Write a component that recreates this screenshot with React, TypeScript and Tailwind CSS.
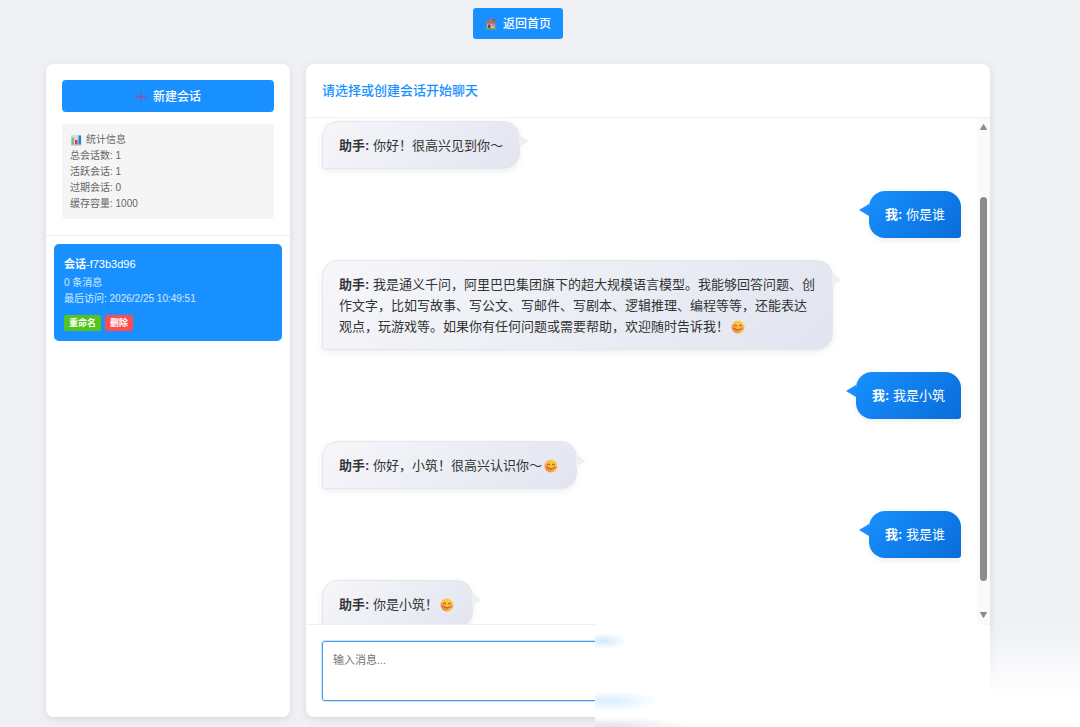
import React from "react";

type Message = { from: "assistant" | "user"; text: string; smile?: boolean };

const messages: Message[] = [
  { from: "assistant", text: "你好！很高兴见到你～" },
  { from: "user", text: "你是谁" },
  {
    from: "assistant",
    text: "我是通义千问，阿里巴巴集团旗下的超大规模语言模型。我能够回答问题、创作文字，比如写故事、写公文、写邮件、写剧本、逻辑推理、编程等等，还能表达观点，玩游戏等。如果你有任何问题或需要帮助，欢迎随时告诉我！",
    smile: true,
  },
  { from: "user", text: "我是小筑" },
  { from: "assistant", text: "你好，小筑！很高兴认识你～", smile: true },
  { from: "user", text: "我是谁" },
  { from: "assistant", text: "你是小筑！", smile: true },
];

const stats: [string, number][] = [
  ["总会话数", 1],
  ["活跃会话", 1],
  ["过期会话", 0],
  ["缓存容量", 1000],
];

function HouseIcon() {
  return (
    <svg viewBox="0 0 24 24" className="h-3 w-3" aria-hidden="true">
      <path d="M4 11h16v10H4z" fill="#d9a788" />
      <path d="M13 11h7v10h-7z" fill="#e8cdb8" />
      <path d="M16 2h3v6h-3z" fill="#8d4a3c" />
      <path d="M9 2 1 11l2 2 6-6 6 6h8L15 3z" fill="#d8623e" />
      <path d="M6 13h5v8H6z" fill="#7d4536" />
      <path d="M14 13h5v4h-5z" fill="#4e9be0" />
      <path d="M1 20c2-3 4-2 5 0h10c2-3 5-3 7 0v3H1z" fill="#7fa35a" />
    </svg>
  );
}

function PlusIcon() {
  return (
    <svg viewBox="0 0 12 12" className="h-3 w-3" aria-hidden="true">
      <path d="M6 .5v11M.5 6h11" stroke="#7460bf" strokeWidth="1.8" fill="none" />
    </svg>
  );
}

function ChartIcon() {
  return (
    <svg viewBox="0 0 24 24" className="h-3 w-3" aria-hidden="true">
      <path d="M2 2h21v20H2z" fill="#d3dde4" />
      <path d="M3 7h5v14H3z" fill="#7dbb80" />
      <path d="M10 12h5v9h-5z" fill="#d6365c" />
      <path d="M17 3h5v18h-5z" fill="#2f7ecb" />
      <path d="M2 21h21v2H2z" fill="#a9b9c3" />
    </svg>
  );
}

function SmileIcon() {
  return (
    <svg viewBox="0 0 28 28" className="mx-0.5 inline-block h-3.5 w-3.5 align-[-3px]" role="img" aria-label="微笑">
      <defs>
        <linearGradient id="smile-face" x1="1" y1="0" x2="0" y2="1">
          <stop offset="0" stopColor="#ffd84a" />
          <stop offset="0.6" stopColor="#fcb440" />
          <stop offset="1" stopColor="#f0653f" />
        </linearGradient>
      </defs>
      <circle cx="14" cy="14" r="13" fill="url(#smile-face)" />
      <circle cx="5.5" cy="17" r="3" fill="#f4664a" opacity=".5" />
      <circle cx="22.5" cy="17" r="3" fill="#f4664a" opacity=".5" />
      <path d="M6.500 11.500q2.500-3.500 5 0M16.500 11.500q2.500-3.500 5 0M7.500 17q6.500 7 13 0" fill="none" stroke="#7a4020" strokeWidth="1.8" strokeLinecap="round" />
    </svg>
  );
}

function Bubble({ message }: { message: Message }) {
  if (message.from === "user") {
    return (
      <li className="relative max-w-[80%] self-end rounded-2xl rounded-br-[3px] bg-linear-135 from-[#1890ff] to-[#096dd9] px-4 py-[13px] text-white shadow-[0_2px_6px_rgba(0,0,0,0.08)]">
        <span className="absolute top-[13px] -left-[10px] border-y-6 border-r-10 border-y-transparent border-r-[#1890ff]" />
        <strong>我:</strong> {message.text}
      </li>
    );
  }
  return (
    <li className="relative max-w-[80%] self-start rounded-2xl rounded-bl-[3px] border border-[#e4e6ea] bg-linear-135 from-[#f5f7fa] to-[#e2e5f0] px-4 pt-[13px] pb-3 text-[#333333] shadow-[0_2px_6px_rgba(0,0,0,0.07)]">
      <span className="absolute top-[13px] -right-[10px] border-y-6 border-l-10 border-y-transparent border-l-[#f0f0f0]" />
      <strong>助手:</strong> {message.text}
      {message.smile && <SmileIcon />}
    </li>
  );
}

function Scrollbar() {
  return (
    <div className="flex w-[13px] flex-col items-center bg-[#fafafa] py-1.5" aria-hidden="true">
      <svg viewBox="0 0 7 6" className="h-1.5 w-[7px]">
        <path d="M3.500 0.500 6.500 5.500H.5z" fill="#8b8b8b" stroke="#8b8b8b" strokeLinejoin="round" />
      </svg>
      <div className="mt-[67px] mb-[31px] w-[7px] flex-1 rounded-full bg-[#8b8b8b]" />
      <svg viewBox="0 0 7 6" className="h-1.5 w-[7px]">
        <path d="M3.500 5.500 6.500.5H.5z" fill="#8b8b8b" stroke="#8b8b8b" strokeLinejoin="round" />
      </svg>
    </div>
  );
}

function Sidebar() {
  return (
    <aside className="flex w-[244px] shrink-0 flex-col rounded-lg bg-white shadow-[0_2px_8px_rgba(0,0,0,0.1)]">
      <div className="border-b border-[#f0f0f0] p-4">
        <button type="button" className="flex h-8 w-full items-center justify-center gap-1.5 rounded bg-[#1890ff] pt-px text-[12px] font-medium text-white">
          <PlusIcon />
          新建会话
        </button>
        <div className="mt-3 rounded bg-[#f5f5f5] px-2 pt-2 pb-[7px] text-[10px] leading-4 text-[#666666]">
          <div className="flex items-center gap-1">
            <ChartIcon />
            统计信息
          </div>
          {stats.map(([label, value]) => (
            <div key={label}>
              {label}: {value}
            </div>
          ))}
        </div>
      </div>
      <div className="p-2">
        <div className="rounded-[5px] bg-[#1890ff] p-2.5 text-white">
          <h2 className="text-[11px] leading-[21px] font-medium">
            <strong>会话</strong>-f73b3d96
          </h2>
          <div className="text-[10px] leading-4 text-white/80">
            <p>0 条消息</p>
            <p>最后访问: 2026/2/25 10:49:51</p>
          </div>
          <div className="mt-2 flex gap-1 text-[9px] leading-4 font-bold">
            <button type="button" className="rounded-xs bg-[#52c41a] px-[5px]">重命名</button>
            <button type="button" className="rounded-xs bg-[#ff4d4f] px-[5px]">删除</button>
          </div>
        </div>
      </div>
    </aside>
  );
}

function CornerHaze() {
  return (
    <div className="pointer-events-none absolute right-0 bottom-0 flex h-[103px] w-[485px]" aria-hidden="true">
      <div className="relative flex-1 overflow-hidden bg-white">
        <div className="absolute top-[9px] -left-4 h-4 w-12 rounded-full bg-[radial-gradient(closest-side,#cfe8fc,transparent)]" />
        <div className="absolute top-[67px] -left-8 h-5 w-24 rounded-full bg-[radial-gradient(closest-side,#d8eefd,transparent)]" />
        <div className="absolute -bottom-2.5 -left-16 h-5 w-40 rounded-full bg-[radial-gradient(closest-side,#dfe1e5,transparent)]" />
      </div>
      <div className="w-3 bg-linear-to-r from-white to-white/0" />
      <div className="w-[88px]" />
      <div className="absolute right-0 h-full w-[100px] bg-linear-to-b from-white/0 to-white to-70%" />
    </div>
  );
}

export default function App() {
  return (
    <div className="relative flex h-screen flex-col overflow-hidden bg-[#eff1f5] pt-2 pr-[90px] pb-2.5 pl-[46px] font-['Liberation_Sans','Noto_Sans_CJK_SC',sans-serif]">
      <nav className="flex justify-center">
        <a href="#home" className="flex h-[31px] items-center gap-1.5 rounded-[3px] bg-[#1890ff] px-3 text-[12px] font-medium text-white">
          <HouseIcon />
          返回首页
        </a>
      </nav>
      <div className="mt-[25px] flex min-h-0 flex-1 gap-4">
        <Sidebar />
        <main className="flex min-w-0 flex-1 flex-col overflow-hidden rounded-lg bg-white shadow-[0_2px_8px_rgba(0,0,0,0.1)]">
          <header className="border-b border-[#f0f0f0] p-4">
            <h1 className="text-[13px] leading-[21px] font-medium text-[#1890ff]">请选择或创建会话开始聊天</h1>
          </header>
          <div className="flex min-h-0 flex-1">
            <ul className="flex min-w-0 flex-1 flex-col gap-[22px] overflow-hidden px-4 pt-[3px] text-[13px] leading-[21px]">
              {messages.map((message, index) => (
                <Bubble key={index} message={message} />
              ))}
            </ul>
            <Scrollbar />
          </div>
          <form className="flex border-t border-[#f0f0f0] p-4">
            <textarea
              aria-label="输入消息"
              placeholder="输入消息..."
              className="h-[60px] flex-1 resize-none rounded-[3px] border border-[#4a9be8] px-2.5 py-2 text-[11px] leading-5 shadow-[0_0_0_1px_rgba(24,144,255,0.25)] outline-none placeholder:text-[#757575]"
            />
          </form>
        </main>
      </div>
      <CornerHaze />
    </div>
  );
}
